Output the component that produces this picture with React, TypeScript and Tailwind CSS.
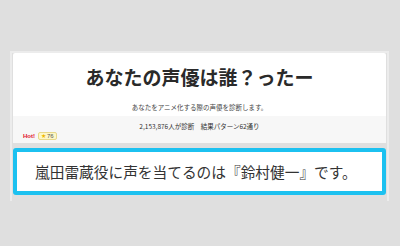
export default function App() {
  const jp = { fontFamily: '"Noto Sans CJK JP", "Noto Sans", sans-serif' };
  return (
    <div className="w-[400px] h-[246px] bg-[#dfdfdf] overflow-hidden pt-[51px]" style={jp}>
      <div className="ml-[10px] w-[379px] h-[150px] border-l-[2px] border-t-[2px] border-r-[2px] border-[#ececec] px-[1px]">
        <div className="bg-white rounded-t-[2px]">
          <div className="h-[63px] flex flex-col items-center">
            <div className="mt-[12px] text-[19px] leading-[24px] font-bold text-[#2a2a2a]">あなたの声優は誰？ったー</div>
            <div className="mt-[14px] text-[6.5px] leading-[9px] text-[#444]">あなたをアニメ化する際の声優を診断します。</div>
          </div>
          <div className="bg-[#f7f7f7] h-[27px]">
            <div className="pt-[6px] text-center text-[6.5px] leading-[9px] text-[#333]">2,153,876人が診断　結果パターン62通り</div>
            <div className="flex items-center gap-[3px] ml-[10px] mt-[1px]">
              <span className="text-[6px] font-bold text-[#e0102a] leading-[8px]" style={{ fontFamily: '"Liberation Sans", sans-serif' }}>Hot!</span>
              <span className="flex items-center gap-[1px] h-[8px] px-[2px] rounded-[2px] bg-[#fdf7c8] border border-[#e8d98a] text-[6px] leading-[6px] text-[#555]" style={{ fontFamily: '"Liberation Sans", sans-serif' }}>
                <span className="text-[#f0b800]">★</span>76
              </span>
            </div>
          </div>
        </div>
        <div className="mt-[5px] h-[47px] border-[4px] border-[#1cc1f0] rounded-[3px] bg-white flex items-center justify-start">
          <span className="ml-[18px] text-[14.7px] leading-[18px] text-[#333] whitespace-nowrap">嵐田雷蔵役に声を当てるのは『鈴村健一』です。</span>
        </div>
      </div>
    </div>
  );
}
